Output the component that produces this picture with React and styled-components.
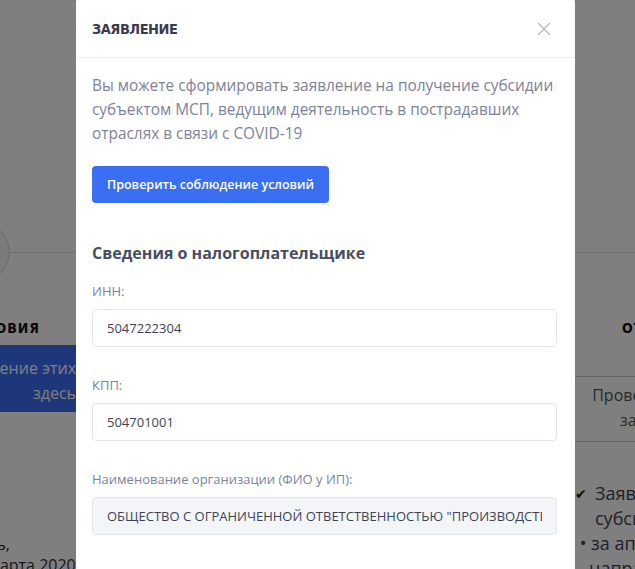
import React from 'react'
import styled, { createGlobalStyle } from 'styled-components'

const GlobalStyle = createGlobalStyle`
    html, body {
        margin: 0;
        padding: 0;
        background: #ffffff;
        overflow: hidden;
        font-family: "Open Sans", "Noto Sans", sans-serif;
    }
`

/* page that sits under the overlay */

const Page = styled.div`
    width: 1000px;
    margin-left: -180px;
    padding-top: 221px;
    color: #3f4254;
`

const Stepper = styled.div`
    display: flex;
    align-items: center;
    height: 62px;
`

const StepCircle = styled.div`
    width: 60px;
    height: 60px;
    margin-left: 130px;
    border-radius: 50%;
    border: 1px solid #d6d6e0;
    background: #f7f7fa;
    box-sizing: border-box;
`

const StepLine = styled.div`
    flex: 1;
    height: 1px;
    background: #dcdce4;
`

const Table = styled.div`
    display: grid;
    grid-template-columns: 400px 355px 172px;
    margin-top: 30px;
`

const HeadCell = styled.div`
    font-family: "Liberation Sans Narrow", "DejaVu Sans Condensed", sans-serif;
    font-weight: 700;
    font-size: 14px;
    letter-spacing: 1px;
    color: #111;
    height: 30px;
    line-height: 30px;
    white-space: nowrap;
    text-align: ${p => p.$align || 'center'};
    padding: ${p => p.$pad || '0'};
`

const BlueCell = styled.div`
    background: #3b6ef5;
    color: #ffffff;
    font-size: 16px;
    line-height: 25px;
    text-align: right;
    padding: 11px 144px 0 0;
    height: 67px;
    box-sizing: border-box;
    margin-top: 2px;
`

const GreyCell = styled.div`
    border-top: 1px solid #c9c9d2;
    border-bottom: 1px solid #c9c9d2;
    color: #555;
    font-size: 16px;
    line-height: 25px;
    text-align: center;
    padding-top: 6px;
    height: 66px;
    box-sizing: border-box;
    margin-top: 33px;
`

const LeftNote = styled.div`
    font-size: 16px;
    line-height: 21px;
    color: #333;
    padding-top: 122px;
`

const NoteLine = styled.div`
    text-align: right;
    white-space: nowrap;
    padding-right: ${p => p.$end}px;
`

const CheckList = styled.div`
    font-size: 18px;
    line-height: 25px;
    color: #3f4254;
    padding-top: 39px;
    white-space: nowrap;
`

const CheckRow = styled.div`
    display: flex;
    gap: 8px;
`

const Mark = styled.span`
    font-size: 14px;
    color: #222;
`

/* modal */

const Overlay = styled.div`
    position: fixed;
    inset: 0;
    background: rgba(0, 0, 0, 0.5);
`

const Dialog = styled.div`
    width: 499px;
    margin: -3px 0 0 76px;
    background: #ffffff;
    border-radius: 5px;
    height: 600px;
`

const Header = styled.div`
    height: 61px;
    box-sizing: border-box;
    padding: 3px 24px 0 16px;
    display: flex;
    align-items: center;
    justify-content: space-between;
    border-bottom: 1px solid #ebedf3;
`

const Title = styled.h3`
    margin: 0;
    font-family: "Liberation Sans Narrow", "DejaVu Sans Condensed", sans-serif;
    font-weight: 700;
    font-size: 14.5px;
    color: #3b3a4f;
    letter-spacing: -0.5px;
`

const CloseButton = styled.button`
    border: 0;
    background: none;
    padding: 0;
    width: 14px;
    height: 14px;
    display: flex;
    cursor: pointer;
`

const Body = styled.div`
    padding: 16px 16px;
`

const Lead = styled.p`
    margin: 0 -14px 0 0;
    font-size: 15.4px;
    line-height: 24px;
    color: #7e8299;
`

const PrimaryButton = styled.button`
    display: block;
    margin-top: 20px;
    height: 37px;
    padding: 0 15px;
    border: 0;
    border-radius: 4px;
    background: #3a6ef3;
    color: #ffffff;
    font-family: "Open Sans", sans-serif;
    font-weight: 600;
    font-size: 12.5px;
`

const Section = styled.h4`
    margin: 38px 0 16px 0;
    font-size: 16px;
    line-height: 24px;
    font-weight: 700;
    color: #464e5f;
`

const Field = styled.div`
    margin-bottom: 28px;
`

const Label = styled.label`
    display: block;
    font-size: 13px;
    line-height: 20px;
    color: #7e8299;
    margin-bottom: 8px;
`

const Input = styled.input`
    display: block;
    width: 465px;
    height: 38px;
    box-sizing: border-box;
    padding: 0 14px;
    border: 1px solid #e4e6ef;
    border-radius: 4px;
    background: ${p => (p.disabled ? '#f3f6f9' : '#ffffff')};
    font-family: "Open Sans", sans-serif;
    font-size: 13px;
    color: #3f4254;
    outline: none;
    &:disabled {
        color: #3f4254;
        -webkit-text-fill-color: #3f4254;
    }
`

const fields = [
    { label: 'ИНН:', value: '5047222304' },
    { label: 'КПП:', value: '504701001' },
    { label: 'Наименование организации (ФИО у ИП):', value: 'ОБЩЕСТВО С ОГРАНИЧЕННОЙ ОТВЕТСТВЕННОСТЬЮ "ПРОИЗВОДСТВЕННАЯ КОМПАНИЯ"', disabled: true },
]

function CloseIcon() {
    return (
        <svg width="14" height="14" viewBox="0 0 14 14">
            <path d="M1.5 1.5 L12.5 12.5 M12.5 1.5 L1.5 12.5" stroke="#b5b5c3" strokeWidth="1.4" strokeLinecap="round" />
        </svg>
    )
}

export default function App() {
    return (
        <>
            <GlobalStyle />
            <Page>
                <Stepper>
                    <StepCircle />
                    <StepLine />
                </Stepper>
                <Table>
                    <HeadCell $align="right" $pad="0 180px 0 0">УСЛОВИЯ</HeadCell>
                    <HeadCell>СТАТУС</HeadCell>
                    <HeadCell $align="left" $pad="0 0 0 47px">ОТВЕТ</HeadCell>
                    <div>
                        <BlueCell>Проверить соблюдение этих<br />здесь</BlueCell>
                        <LeftNote>
                            <NoteLine $end={210}>предприниматель,</NoteLine>
                            <NoteLine $end={129}>до 1 марта 2020 г.</NoteLine>
                        </LeftNote>
                    </div>
                    <div />
                    <div>
                        <GreyCell>Проверить статус<br />заявления</GreyCell>
                        <CheckList>
                            <CheckRow><Mark>✔</Mark><span>Заявление на получение<br />субсидии</span></CheckRow>
                            <div>&nbsp;• за апрель<br />&nbsp;&nbsp;&nbsp;направлено</div>
                        </CheckList>
                    </div>
                </Table>
            </Page>
            <Overlay>
                <Dialog>
                    <Header>
                        <Title>ЗАЯВЛЕНИЕ</Title>
                        <CloseButton aria-label="Закрыть"><CloseIcon /></CloseButton>
                    </Header>
                    <Body>
                        <Lead>
                            Вы можете сформировать заявление на получение субсидии субъектом МСП, ведущим деятельность в пострадавших отраслях в связи с COVID-19
                        </Lead>
                        <PrimaryButton>Проверить соблюдение условий</PrimaryButton>
                        <Section>Сведения о налогоплательщике</Section>
                        {fields.map((f, i) => (
                            <Field key={i}>
                                <Label>{f.label}</Label>
                                <Input readOnly disabled={f.disabled} value={f.value} />
                            </Field>
                        ))}
                    </Body>
                </Dialog>
            </Overlay>
        </>
    )
}
